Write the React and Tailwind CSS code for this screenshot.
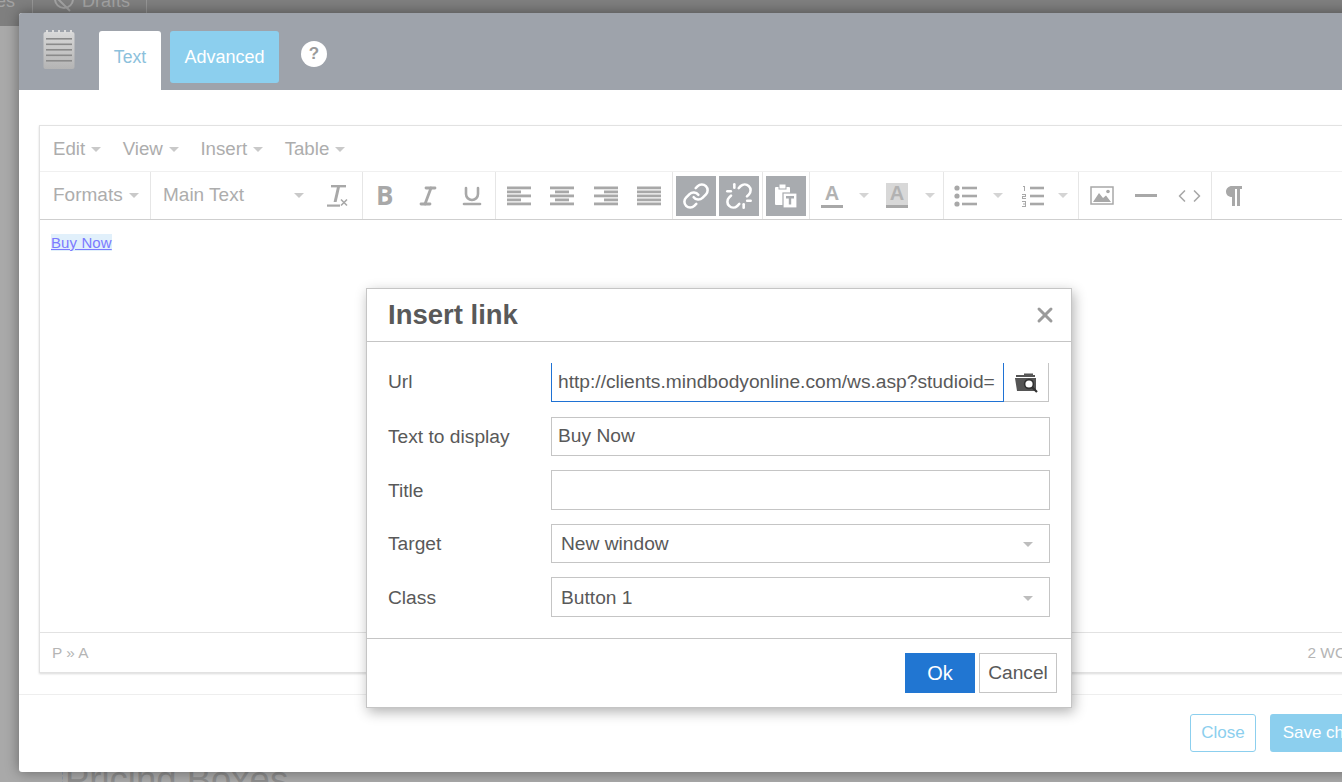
import React from 'react';
import { Italic, Underline, Link, Unlink, X, ChevronLeft, ChevronRight } from 'lucide-react';

const Caret = ({ className = 'border-t-[#c9c9c9]' }) => (
  <span className={`inline-block w-0 h-0 border-x-[5px] border-x-transparent border-t-[5px] ${className}`}></span>
);

const Lines = ({ rows }) => (
  <svg width="24" height="20" viewBox="0 0 24 20" fill="#a8a8a8">
    {rows.map((r, i) => (
      <rect key={i} x={r[0]} y={0.5 + i * 4} width={r[1]} height="2.8" />
    ))}
  </svg>
);

const ToolBtn = ({ children, className = '' }) => (
  <div className={`w-[43.5px] h-[40px] flex items-center justify-center shrink-0 ${className}`}>{children}</div>
);

const Group = ({ children, className = '' }) => (
  <div className={`h-[47px] flex items-center border-r border-[#e6e6e6] shrink-0 ${className}`}>{children}</div>
);

const Notepad = () => (
  <svg width="32" height="39" viewBox="0 0 32 39">
    <defs>
      <linearGradient id="pad" x1="0" y1="0" x2="0" y2="1">
        <stop offset="0" stopColor="#d8d8d8" />
        <stop offset="1" stopColor="#b4b4b4" />
      </linearGradient>
    </defs>
    <rect x="0.5" y="2" width="31" height="37" rx="2" fill="url(#pad)" />
    {[3, 9, 15, 21, 27].map((x) => (
      <rect key={x} x={x} y="0" width="2" height="3" fill="#dcdcdc" />
    ))}
    {[8, 13.5, 19, 24.5, 30].map((y) => (
      <rect key={y} x="3" y={y} width="26" height="1.6" fill="#8a8a8a" />
    ))}
  </svg>
);

const Field = ({ label, labelClass = '', children }) => (
  <div className="flex items-center h-[39.5px] pl-[21px]">
    <div className={`w-[163px] shrink-0 text-[19.2px] text-[#595959] ${labelClass}`}>{label}</div>
    {children}
  </div>
);

const SelectBox = ({ value, className = '' }) => (
  <div className={`w-[499px] h-[39.5px] border border-[#c5c5c5] flex items-center justify-between pl-[9px] pr-[16px] text-[19.2px] text-[#595959] ${className}`}>
    <span>{value}</span>
    <Caret className="border-t-[#bdbdbd]" />
  </div>
);

export default function App() {
  return (
    <div className="relative w-[1342px] h-[782px] overflow-hidden bg-[#b4b4b4] font-['Liberation_Sans',Arial,sans-serif]">
      {/* page behind the overlay */}
      <div className="h-[26px] bg-[#7f7f7f] flex items-start text-[#a3a3a3] text-[18px] leading-none overflow-hidden">
        <div className="w-[33px] h-[13px] border-r border-[#969696]"><span className="block -mt-[8px] -ml-[4px]">es</span></div>
        <div className="w-[114px] h-[13px] border-r border-[#969696] flex items-start pl-[17px] gap-[4px]">
          <svg className="-mt-[5px]" width="28" height="18" viewBox="0 0 28 18" fill="none" stroke="#a3a3a3" strokeWidth="2">
            <circle cx="14" cy="4" r="9" />
            <path d="M4 0 L20 16" />
          </svg>
          <span className="-mt-[8px]">Drafts</span>
        </div>
      </div>
      <div className="h-[756px] bg-[#a9a9a9] pl-[65px] pt-[736px] overflow-hidden">
        <div className="text-[36.5px] leading-none text-[#8d8d8d] border-l border-dashed border-[#8f9aa8] pl-[2px] -ml-[3px] whitespace-nowrap">Pricing Boxes</div>
      </div>

      {/* settings window */}
      <div className="absolute left-[19px] top-[13px] w-[1400px] h-[759px] bg-white rounded-[3px] shadow-[0_0_14px_rgba(0,0,0,0.4)] overflow-hidden">
        <div className="h-[77px] bg-[#9ea3ab] flex items-start relative">
          <div className="ml-[24px] mt-[17px] w-[56px]"><Notepad /></div>
          <div className="w-[62px] h-[59px] mt-[18px] bg-white rounded-t-[3px] flex items-center justify-center pb-[6px] text-[17.6px] text-[#8cc1dc]">Text</div>
          <div className="w-[109px] h-[52px] mt-[18px] ml-[9px] bg-[#8ccfee] rounded-[3px] flex items-center justify-center text-[18px] text-white">Advanced</div>
          <div className="w-[26px] h-[26px] mt-[28px] ml-[22px] bg-white rounded-full flex items-center justify-center text-[17px] font-bold text-[#9a9a9a]">?</div>
        </div>

        <div className="pl-[20px] pt-[35px]">
          <div className="w-[1400px] h-[548px] border border-[#e2e2e2] shadow-[0_1px_2px_rgba(0,0,0,0.15)] flex flex-col">
            {/* menu bar */}
            <div className="h-[46px] flex items-center pl-[13px] pt-[1px] text-[18.7px] text-[#adadad] border-b border-[#f0f0f0]">
              <span>Edit</span><span className="ml-[6px] mr-[21.5px] flex"><Caret /></span>
              <span>View</span><span className="ml-[6px] mr-[21.5px] flex"><Caret /></span>
              <span>Insert</span><span className="ml-[6px] mr-[21.5px] flex"><Caret /></span>
              <span>Table</span><span className="ml-[6px] flex"><Caret /></span>
            </div>

            {/* toolbar */}
            <div className="h-[48px] flex items-center border-b border-[#cfcfcf] text-[19px] text-[#adadad]">
              <Group className="w-[111px] pl-[13px]">
                <span>Formats</span><span className="ml-[6px] flex"><Caret /></span>
              </Group>
              <Group className="w-[212px] pl-[12px]">
                <span className="w-[131px]">Main Text</span>
                <Caret />
                <svg className="ml-[22px]" width="24" height="24" viewBox="0 0 24 24" fill="#a8a8a8">
                  <rect x="5" y="1" width="15" height="2.4" />
                  <path d="M11 3 h3 l-3.4 15 h-3 z" />
                  <rect x="1" y="20.5" width="13" height="2.2" />
                  <path d="M15 15.5 l6 6 M21 15.5 l-6 6" stroke="#a8a8a8" strokeWidth="1.6" />
                </svg>
              </Group>
              <Group className="w-[133px]">
                <ToolBtn><span className="text-[26px] font-bold text-[#a8a8a8] font-['Open_Sans',sans-serif]">B</span></ToolBtn>
                <ToolBtn><Italic size={24} color="#a8a8a8" strokeWidth={2.8} /></ToolBtn>
                <ToolBtn><Underline size={24} color="#a8a8a8" strokeWidth={2.6} /></ToolBtn>
              </Group>
              <Group className="w-[177px] pl-[1px]">
                <ToolBtn><Lines rows={[[0, 24], [0, 14], [0, 24], [0, 14], [0, 24]]} /></ToolBtn>
                <ToolBtn><Lines rows={[[0, 24], [5, 14], [0, 24], [5, 14], [0, 24]]} /></ToolBtn>
                <ToolBtn><Lines rows={[[0, 24], [10, 14], [0, 24], [10, 14], [0, 24]]} /></ToolBtn>
                <ToolBtn><Lines rows={[[0, 24], [0, 24], [0, 24], [0, 24], [0, 24]]} /></ToolBtn>
              </Group>
              <Group className="w-[90px] pl-[3px] gap-[3px]">
                <div className="w-[40px] h-[40px] bg-[#a8abaf] flex items-center justify-center">
                  <Link size={28} color="#ffffff" strokeWidth={2.2} />
                </div>
                <div className="w-[40px] h-[40px] bg-[#a8abaf] flex items-center justify-center">
                  <Unlink size={28} color="#ffffff" strokeWidth={2.2} />
                </div>
              </Group>
              <Group className="w-[47px] pl-[3px]">
                <div className="w-[40px] h-[40px] bg-[#a8abaf] flex items-center justify-center">
                  <svg width="24" height="26" viewBox="0 0 24 26">
                    <rect x="1" y="4" width="15" height="18" rx="1" fill="#ffffff" />
                    <rect x="5" y="1" width="7" height="5" fill="#ffffff" stroke="#a8abaf" />
                    <rect x="9" y="10" width="14" height="15" fill="#ffffff" stroke="#a8abaf" strokeWidth="1.2" />
                    <path d="M12 13 h8 v2.4 h-2.8 v6 h-2.4 v-6 H12 z" fill="#a8abaf" />
                  </svg>
                </div>
              </Group>
              <Group className="w-[134px]">
                <div className="w-[44px] flex justify-center">
                  <div className="w-[22px] flex flex-col items-center">
                    <span className="text-[20px] leading-[20px] font-bold text-[#b2b2b2]">A</span>
                    <span className="w-[22px] h-[3px] bg-[#a8a8a8] mt-[2px]"></span>
                  </div>
                </div>
                <span className="ml-[5px] w-[10px] flex"><Caret className="border-t-[#d4d4d4]" /></span>
                <div className="w-[56px] flex justify-center">
                  <div className="w-[22px] flex flex-col items-center bg-[#d8d8d8]">
                    <span className="text-[20px] leading-[20px] font-bold text-[#b2b2b2]">A</span>
                    <span className="w-[22px] h-[3px] bg-[#a8a8a8] mt-[2px]"></span>
                  </div>
                </div>
                <span className="flex"><Caret className="border-t-[#d4d4d4]" /></span>
              </Group>
              <Group className="w-[135px]">
                <div className="w-[49px] flex justify-start pl-[10px]">
                  <svg width="24" height="22" viewBox="0 0 24 22" fill="#a8a8a8">
                    {[3, 11, 19].map((y) => (
                      <g key={y}>
                        <circle cx="3" cy={y} r="2.6" />
                        <rect x="8" y={y - 1.3} width="15" height="2.6" />
                      </g>
                    ))}
                  </svg>
                </div>
                <span className="flex w-[18px]"><Caret className="border-t-[#d4d4d4]" /></span>
                <div className="w-[44px] flex justify-center">
                  <svg width="24" height="22" viewBox="0 0 24 22" fill="#a8a8a8">
                    <path d="M2 1 h2 v5 h-1 v-4 h-1 z M1 9 h4 v3 h-3 v1 h3 v1 h-4 v-3 h3 v-1 h-3 z M1 16 h4 v6 h-4 v-1 h3 v-1.5 h-2 v-1 h2 v-1.5 h-3 z" />
                    <rect x="9" y="1.7" width="14" height="2.6" />
                    <rect x="9" y="9.7" width="14" height="2.6" />
                    <rect x="9" y="17.7" width="14" height="2.6" />
                  </svg>
                </div>
                <span className="flex ml-[3px]"><Caret className="border-t-[#d4d4d4]" /></span>
              </Group>
              <Group className="w-[133px] pl-[1.5px]">
                <ToolBtn>
                  <svg width="24" height="20" viewBox="0 0 24 20">
                    <rect x="1" y="1" width="22" height="17" fill="none" stroke="#a8a8a8" strokeWidth="1.5" />
                    <path d="M3 16 L9 7 L13 12 L16 9.5 L21 16 z" fill="#a8a8a8" />
                    <circle cx="18" cy="5.5" r="1.8" fill="#a8a8a8" />
                  </svg>
                </ToolBtn>
                <ToolBtn><span className="w-[22px] h-[3px] bg-[#a8a8a8]"></span></ToolBtn>
                <ToolBtn>
                  <span className="flex -space-x-[5px]">
                    <ChevronLeft size={20} color="#a8a8a8" strokeWidth={2} />
                    <ChevronRight size={20} color="#a8a8a8" strokeWidth={2} />
                  </span>
                </ToolBtn>
              </Group>
              <ToolBtn>
                <svg width="18" height="20" viewBox="0 0 18 20" fill="#a8a8a8">
                  <path d="M7 0 h10 v3 h-2 v17 h-3 V3 h-2 v17 H7 v-9 C3 11 1 8.5 1 5.5 C1 2.5 3.5 0 7 0 z" />
                </svg>
              </ToolBtn>
            </div>

            {/* content */}
            <div className="flex-1 pl-[11px] pt-[14px]">
              <a className="block w-fit bg-[#e1f0fb] text-[15px] leading-[17px] tracking-[0.1px] text-[#7b7bff] underline">Buy Now</a>
            </div>

            {/* status */}
            <div className="h-[40px] border-t border-[#e2e2e2] flex items-center pl-[12px] text-[15.4px] text-[#b5b5b5]">
              <span>P » A</span>
              <span className="ml-[1219px] whitespace-nowrap">2 WORDS</span>
            </div>
          </div>
        </div>

        <div className="mt-[21px] h-[78px] border-t border-[#eeeeee] flex items-start pl-[1171px] pt-[19px]">
          <div className="w-[66px] h-[38px] border border-[#8ccfee] rounded-[3px] flex items-center justify-center text-[17px] text-[#8ccfee]">Close</div>
          <div className="w-[133px] h-[38px] ml-[14px] bg-[#8ccfee] rounded-[3px] flex items-center justify-center text-[17px] text-white whitespace-nowrap">Save changes</div>
        </div>
      </div>

      {/* insert link dialog */}
      <div className="absolute left-[366px] top-[288px] w-[706px] h-[420px] bg-white border border-[#c5c5c5] shadow-[2px_4px_12px_rgba(0,0,0,0.3)] flex flex-col">
        <div className="h-[53px] border-b border-[#c5c5c5] flex items-center justify-between pl-[21px] pr-[14px] shrink-0">
          <span className="text-[27.5px] font-bold text-[#595959]">Insert link</span>
          <X size={24} color="#9b9b9b" strokeWidth={3} />
        </div>
        <div className="h-[297px] border-b border-[#c5c5c5] pt-[21px] flex flex-col shrink-0">
          <Field label="Url">
            <div className="w-[453px] h-[39px] self-start border-l border-r border-b border-[#1f72d4] flex items-center pl-[6px] text-[19.2px] text-[#595959] overflow-hidden whitespace-nowrap">
              http://clients.mindbodyonline.com/ws.asp?studioid=
            </div>
            <div className="w-[45px] h-[39px] self-start border-r border-b border-[#c5c5c5] flex items-center justify-center">
              <svg width="24" height="22" viewBox="0 0 24 22">
                <path d="M2 4 h8 v-1.5 h9 v1.5 h2 v2 H2 z" fill="#555555" />
                <path d="M1 7 h21 v13 H3 z" fill="#555555" />
                <circle cx="15" cy="13" r="4.4" fill="#ffffff" stroke="#333333" strokeWidth="1.6" />
                <path d="M18 16 L23 21" stroke="#333333" strokeWidth="2.2" />
              </svg>
            </div>
          </Field>
          <div className="mt-[14px]">
            <Field label="Text to display" labelClass="pt-[2px]">
              <div className="w-[499px] h-[39.5px] border border-[#c5c5c5] flex items-center pl-[6px] text-[19.2px] text-[#595959]">Buy Now</div>
            </Field>
          </div>
          <div className="mt-[14px]">
            <Field label="Title" labelClass="pt-[4px]">
              <div className="w-[499px] h-[39.5px] border border-[#c5c5c5]"></div>
            </Field>
          </div>
          <div className="mt-[14px]">
            <Field label="Target" labelClass="pt-[2px]"><SelectBox value="New window" className="pt-[2px]" /></Field>
          </div>
          <div className="mt-[14px]">
            <Field label="Class" labelClass="pt-[4px]"><SelectBox value="Button 1" className="pt-[4px]" /></Field>
          </div>
        </div>
        <div className="flex-1 flex items-start pl-[538px] pt-[14px]">
          <div className="w-[70px] h-[40px] bg-[#2176d2] flex items-center justify-center text-[20px] text-white">Ok</div>
          <div className="w-[78px] h-[40px] ml-[4px] border border-[#c5c5c5] flex items-center justify-center text-[19.2px] text-[#595959]">Cancel</div>
        </div>
      </div>
    </div>
  );
}
